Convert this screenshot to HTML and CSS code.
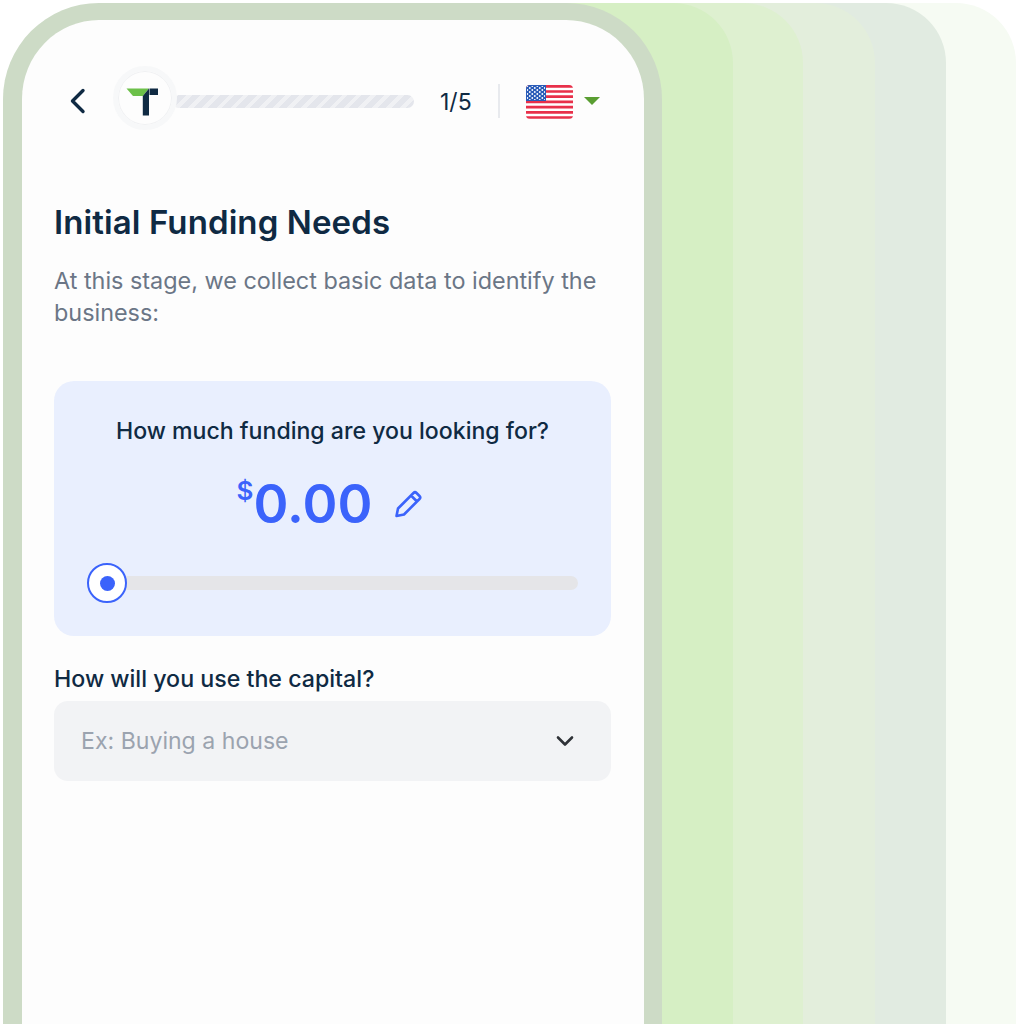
FILE: index.html
```html
<!DOCTYPE html>
<html lang="en">
<head>
    <meta charset="UTF-8">
    <title>Initial Funding Needs</title>
    <link rel="stylesheet" href="styles.css">
</head>
<body>
    <div class="stack">
        <div class="layer layer-5"></div>
        <div class="layer layer-4"></div>
        <div class="layer layer-3"></div>
        <div class="layer layer-2"></div>
        <div class="layer layer-1"></div>

        <div class="phone">
            <header class="topbar">
                <svg class="back" width="16" height="26" viewBox="0 0 16 26">
                    <path d="M13 2.5 L2.5 13 L13 23.5" fill="none" stroke="#0f2a43" stroke-width="3.4" stroke-linecap="round" stroke-linejoin="round"/>
                </svg>
                <div class="progress">
                    <div class="progress-bar"></div>
                    <div class="logo">
                        <svg width="34" height="30" viewBox="0 0 34 30">
                            <path d="M0.5 0.5 H23 L16.8 8 H7 Z" fill="#6cc049"/>
                            <path d="M23 0.5 V27.5 H16.8 V8 Z" fill="#0f2a43"/>
                            <rect x="23.5" y="0.5" width="8.5" height="6.5" fill="#0f2a43"/>
                        </svg>
                    </div>
                </div>
                <span class="step">1/5</span>
                <div class="divider"></div>
                <svg class="flag" width="47" height="34" viewBox="0 0 47 34">
                    <defs>
                        <clipPath id="flagClip"><rect width="47" height="34" rx="4"/></clipPath>
                        <pattern id="stars" width="5" height="4" patternUnits="userSpaceOnUse">
                            <circle cx="1.3" cy="1" r="0.9" fill="#fff"/>
                            <circle cx="3.8" cy="3" r="0.9" fill="#fff"/>
                        </pattern>
                    </defs>
                    <g clip-path="url(#flagClip)">
                        <rect width="47" height="34" fill="#fff"/>
                        <path d="M0 1.3H47M0 6.5H47M0 11.7H47M0 16.9H47M0 22.1H47M0 27.3H47M0 32.5H47" stroke="#e8304a" stroke-width="2.7"/>
                        <rect width="20" height="16" fill="#2a5cb8"/>
                        <rect x="1" y="1" width="18" height="14" fill="url(#stars)"/>
                    </g>
                </svg>
                <div class="flag-caret"></div>
            </header>

            <h1 class="title">Initial Funding Needs</h1>
            <p class="intro">At this stage, we collect basic data to identify the business:</p>

            <section class="card">
                <h2 class="card-question">How much funding are you looking for?</h2>
                <div class="amount">
                    <span class="currency">$</span><span class="value">0.00</span>
                    <svg class="edit" width="28" height="28" viewBox="0 0 28 28">
                        <path d="M2.5 26 L4 18.5 L19.5 3 Q21 1.5 22.5 3 L25.5 6 Q27 7.5 25.5 9 L10 24.5 Z M17 5.5 L23 11.5" fill="none" stroke="#3b63fb" stroke-width="2.6" stroke-linejoin="round" stroke-linecap="round"/>
                    </svg>
                </div>
                <div class="slider">
                    <div class="slider-track"></div>
                    <div class="slider-thumb"><span></span></div>
                </div>
            </section>

            <label class="field-label">How will you use the capital?</label>
            <div class="select">
                <span>Ex: Buying a house</span>
                <svg width="18" height="12" viewBox="0 0 18 12">
                    <path d="M2 2.5 L9 9.5 L16 2.5" fill="none" stroke="#2f3237" stroke-width="2.6" stroke-linecap="round" stroke-linejoin="round"/>
                </svg>
            </div>
        </div>
    </div>
</body>
</html>
```

FILE: styles.css
```css
* {
    box-sizing: border-box;
}

html, body {
    margin: 0;
    padding: 0;
    background: #ffffff;
}

body {
    width: 1016px;
    height: 1024px;
    overflow: hidden;
    font-family: Inter, "Liberation Sans", sans-serif;
    font-optical-sizing: none;
    color: #0f2a43;
}

.stack {
    position: relative;
    height: 1024px;
    padding: 3px 0 0 3px;
    overflow: hidden;
}

/* Cards fanned out behind the phone */
.layer {
    position: absolute;
    top: 3px;
    left: 300px;
    height: 1100px;
    border-radius: 0 60px 0 0;
}

.layer-1 { width: 433px; background: #d6efc4; }
.layer-2 { width: 503px; background: #def0d0; }
.layer-3 { width: 575px; background: #e3eedc; }
.layer-4 { width: 646px; background: #e1ebe1; }
.layer-5 { width: 716px; background: #f6fbf3; }

.phone {
    position: relative;
    width: 659px;
    height: 1100px;
    padding: 48px 33px 0 32px;
    background: #fdfdfd;
    border-style: solid;
    border-color: #cddbc6;
    border-width: 17px 18px 0 19px;
    border-radius: 96px 96px 0 0;
}

.topbar {
    display: flex;
    align-items: center;
    height: 66px;
}

.back {
    margin-left: 16px;
}

.progress {
    display: flex;
    align-items: center;
    position: relative;
    width: 301px;
    height: 66px;
    margin-left: 27px;
}

.progress-bar {
    width: 242px;
    height: 13px;
    margin-left: 59px;
    border-radius: 7px;
    background: repeating-linear-gradient(-45deg, #e4e6ec 0, #e4e6ec 6px, #f0f1f4 6px, #f0f1f4 10px);
}

.logo {
    position: absolute;
    left: 0;
    top: -2px;
    width: 64px;
    height: 64px;
    display: flex;
    align-items: center;
    justify-content: center;
    padding-top: 10px;
    background: #fdfdfd;
    border: 5px solid #f7f8f9;
    border-radius: 50%;
    box-shadow: inset 0 0 0 1px #f0f1f3;
}

.logo svg {
    margin-right: 4px;
}

.step {
    margin: 2px 0 0 26px;
    font-size: 23px;
}

.divider {
    width: 2px;
    height: 34px;
    margin-left: 26px;
    background: #e8eaee;
}

.flag {
    margin: 2px 0 0 26px;
}

.flag-caret {
    width: 0;
    height: 0;
    margin-left: 11px;
    border-left: 8.5px solid transparent;
    border-right: 8.5px solid transparent;
    border-top: 8px solid #5a9e32;
}

.title {
    margin: 68px 0 0;
    font-size: 33px;
    font-weight: 600;
    line-height: 40px;
    letter-spacing: 0.1px;
}

.intro {
    margin: 23px 0 0;
    font-size: 23.4px;
    line-height: 32px;
    color: #6b7686;
}

.card {
    height: 255px;
    margin-top: 52px;
    padding: 34px 33px 0;
    background: #e9effe;
    border-radius: 20px;
}

.card-question {
    margin: 0;
    font-size: 23.1px;
    font-weight: 500;
    line-height: 32px;
    text-align: center;
}

.amount {
    display: flex;
    justify-content: center;
    align-items: center;
    height: 64px;
    margin-top: 25px;
    color: #3b63fb;
}

.currency {
    align-self: flex-start;
    margin-top: 4px;
    font-size: 26px;
    font-weight: 600;
    line-height: 30px;
}

.value {
    font-size: 53px;
    font-weight: 600;
    line-height: 64px;
}

.edit {
    margin: 0 6px 0 22px;
}

.slider {
    position: relative;
    height: 40px;
    margin-top: 27px;
    display: flex;
    align-items: center;
}

.slider-track {
    width: 100%;
    height: 14px;
    background: #e5e5e8;
    border-radius: 7px;
}

.slider-thumb {
    position: absolute;
    left: 0;
    top: 0;
    width: 40px;
    height: 40px;
    display: flex;
    align-items: center;
    justify-content: center;
    background: #ffffff;
    border: 2px solid #3b63fb;
    border-radius: 50%;
}

.slider-thumb span {
    width: 15px;
    height: 15px;
    background: #3b63fb;
    border-radius: 50%;
}

.field-label {
    display: block;
    margin-top: 27px;
    font-size: 23.2px;
    font-weight: 500;
    line-height: 32px;
}

.select {
    display: flex;
    align-items: center;
    justify-content: space-between;
    height: 80px;
    margin-top: 6px;
    padding: 0 37px 0 27px;
    background: #f2f3f5;
    border-radius: 14px;
    font-size: 23.1px;
    color: #9ba3af;
}
```
